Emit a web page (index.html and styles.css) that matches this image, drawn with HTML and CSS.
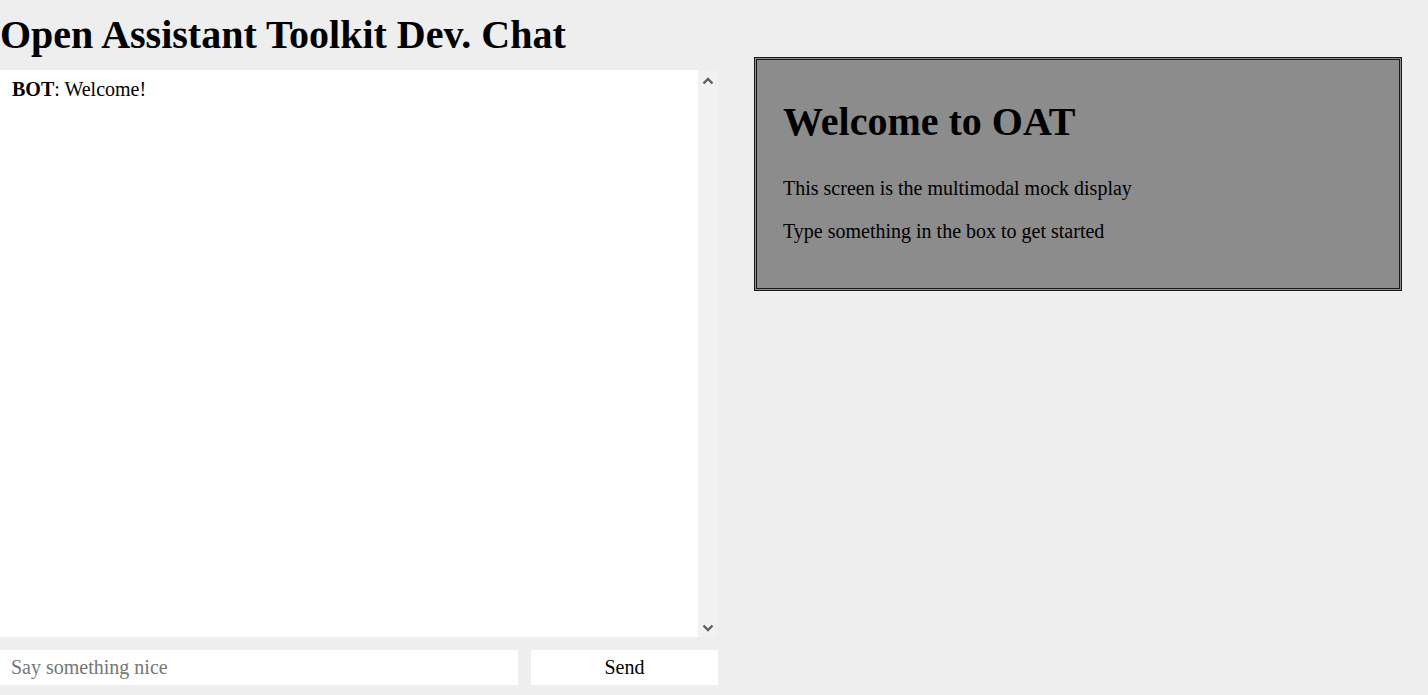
FILE: index.html
```html
<!DOCTYPE html>
<html>
<head>
<meta charset="utf-8">
<link rel="stylesheet" href="styles.css">
</head>
<body>
<div class="page">
  <div class="left">
    <h1 class="title">Open Assistant Toolkit Dev. Chat</h1>
    <div class="chat">
      <div class="log">
        <div class="msg"><b>BOT</b>: Welcome!</div>
      </div>
      <div class="scrollbar">
        <svg class="arrow" width="12" height="8" viewBox="0 0 12 8"><path d="M1.5 6.5 L6 2 L10.5 6.5" fill="none" stroke="#5f5f5f" stroke-width="2.4"/></svg>
        <svg class="arrow" width="12" height="8" viewBox="0 0 12 8"><path d="M1.5 1.5 L6 6 L10.5 1.5" fill="none" stroke="#5f5f5f" stroke-width="2.4"/></svg>
      </div>
    </div>
    <form class="composer">
      <input class="input" type="text" placeholder="Say something nice">
      <button class="send" type="button">Send</button>
    </form>
  </div>
  <div class="right">
    <div class="display">
      <h2 class="display-title">Welcome to OAT</h2>
      <p class="display-text">This screen is the multimodal mock display</p>
      <p class="display-text">Type something in the box to get started</p>
    </div>
  </div>
</div>
</body>
</html>
```

FILE: styles.css
```css
html, body {
  margin: 0;
  padding: 0;
  background: #eeeeee;
  font-family: "Liberation Serif", "Times New Roman", serif;
  color: #000;
}
.page {
  display: flex;
  gap: 36px;
  height: 695px;
  box-sizing: border-box;
}
.left {
  width: 718px;
  display: flex;
  flex-direction: column;
}
.title {
  font-size: 40px;
  font-weight: bold;
  margin: 12px 0 13px 0;
  line-height: 45px;
}
.chat {
  height: 567px;
  display: flex;
  background: #fff;
}
.log {
  flex: 1;
  padding: 8px 12px;
  font-size: 20px;
}
.scrollbar {
  width: 20px;
  background: #f1f1f1;
  display: flex;
  flex-direction: column;
  justify-content: space-between;
  align-items: center;
  padding: 7px 0 5px 0;
}
.composer {
  margin: 13px 0 0 0;
  display: flex;
  gap: 13px;
  height: 35px;
}
.input {
  width: 518px;
  border: none;
  outline: none;
  background: #fff;
  font-family: "Liberation Serif", "Times New Roman", serif;
  font-size: 20px;
  padding: 0 11px;
  box-sizing: border-box;
  margin: 0;
}
.input::placeholder {
  color: #767676;
}
.send {
  flex: 1;
  border: none;
  background: #fff;
  font-family: "Liberation Serif", "Times New Roman", serif;
  font-size: 20px;
  color: #000;
  margin: 0;
  padding: 0;
}
.right {
  width: 648px;
  padding-top: 57px;
}
.display {
  background: #8c8c8c;
  border: 3px double #1a1a1a;
  padding: 26px 26px 25px 26px;
}
.display-title {
  font-size: 40px;
  font-weight: bold;
  margin: 13px 0 33px 0;
  line-height: 45px;
}
.display-text {
  font-size: 20px;
  margin: 0 0 20px 0;
  line-height: 23px;
}
```
